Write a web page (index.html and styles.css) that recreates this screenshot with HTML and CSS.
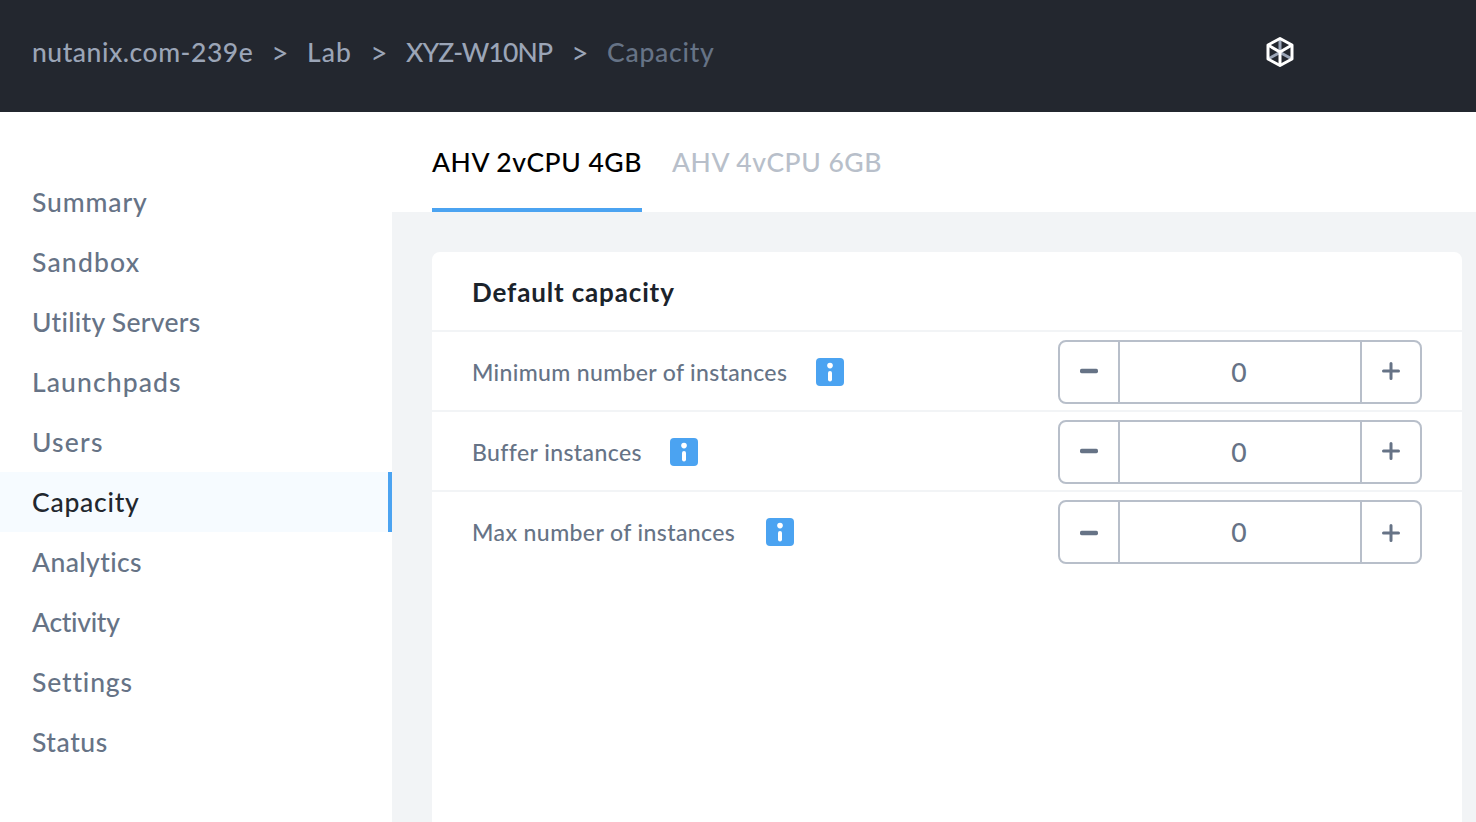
FILE: index.html
```html
<!DOCTYPE html>
<html lang="en">
<head>
<meta charset="utf-8">
<title>Capacity</title>
<link rel="stylesheet" href="styles.css">
</head>
<body>
<svg class="sprite" aria-hidden="true">
  <symbol id="info" viewBox="0 0 28 28">
    <rect width="28" height="28" rx="4" fill="#4ba3f1"/>
    <circle cx="14" cy="7.6" r="2.8" fill="#fff"/>
    <rect x="12" y="13" width="4" height="10.6" rx="2" fill="#fff"/>
  </symbol>
  <symbol id="minus" viewBox="0 0 18 18">
    <rect y="6.8" width="18" height="4.4" rx="1.6" fill="#667386"/>
  </symbol>
  <symbol id="plus" viewBox="0 0 18 18">
    <path d="M9 1.5v15M1.5 9h15" stroke="#667386" stroke-width="3" stroke-linecap="round"/>
  </symbol>
</svg>
<header class="topbar">
  <nav class="crumbs">
    <a class="crumb crumb-org">nutanix.com-239e</a>
    <span class="sep">&gt;</span>
    <a class="crumb crumb-lab">Lab</a>
    <span class="sep">&gt;</span>
    <a class="crumb crumb-account">XYZ-W10NP</a>
    <span class="sep">&gt;</span>
    <span class="crumb crumb-current">Capacity</span>
  </nav>
  <svg class="logo" viewBox="0 0 30 32" fill="none">
    <path d="M15 3v13M3 23l12-6.500 12 6.500" stroke="#9ba5b7" stroke-width="3"/>
    <path d="M15 2.500L27 9v14l-12 6.500L3 23V9z" stroke="#fff" stroke-width="3" stroke-linejoin="round"/>
    <path d="M3 9l12 7 12-7M15 16v13" stroke="#fff" stroke-width="3"/>
  </svg>
</header>
<div class="layout">
  <aside class="sidebar">
    <a class="item summary">Summary</a>
    <a class="item sandbox">Sandbox</a>
    <a class="item utility">Utility Servers</a>
    <a class="item launchpads">Launchpads</a>
    <a class="item users">Users</a>
    <a class="item capacity active">Capacity</a>
    <a class="item analytics">Analytics</a>
    <a class="item activity">Activity</a>
    <a class="item settings">Settings</a>
    <a class="item status">Status</a>
  </aside>
  <main class="main">
    <div class="tabs">
      <a class="tab selected">AHV 2vCPU 4GB</a>
      <a class="tab">AHV 4vCPU 6GB</a>
    </div>
    <section class="card">
      <h2 class="card-title">Default capacity</h2>
      <div class="row">
        <span class="label label-min">Minimum number of instances</span>
        <svg class="info"><use href="#info"/></svg>
        <div class="stepper">
          <button class="step"><svg class="glyph"><use href="#minus"/></svg></button>
          <span class="value">0</span>
          <button class="step"><svg class="glyph"><use href="#plus"/></svg></button>
        </div>
      </div>
      <div class="row">
        <span class="label label-buffer">Buffer instances</span>
        <svg class="info"><use href="#info"/></svg>
        <div class="stepper">
          <button class="step"><svg class="glyph"><use href="#minus"/></svg></button>
          <span class="value">0</span>
          <button class="step"><svg class="glyph"><use href="#plus"/></svg></button>
        </div>
      </div>
      <div class="row last">
        <span class="label label-max">Max number of instances</span>
        <svg class="info"><use href="#info"/></svg>
        <div class="stepper">
          <button class="step"><svg class="glyph"><use href="#minus"/></svg></button>
          <span class="value">0</span>
          <button class="step"><svg class="glyph"><use href="#plus"/></svg></button>
        </div>
      </div>
    </section>
  </main>
</div>
</body>
</html>
```
FILE: styles.css
```css
* { box-sizing: border-box; }
body {
  margin: 0;
  height: 822px;
  overflow: hidden;
  display: flex;
  flex-direction: column;
  background: #fff;
  color: #667386;
  font: 500 26.5px/60px Lato, "Open Sans", sans-serif;
  font-variant-ligatures: none;
  white-space: nowrap;
}
.sprite { display: none; }
.topbar {
  flex: none;
  height: 112px;
  padding: 0 181px 8px 32px;
  display: flex;
  align-items: center;
  justify-content: space-between;
  background: #23272f;
  color: #9ba5b7;
}
.crumbs { display: flex; }
.sep { width: 54px; text-align: center; font-size: 30px; font-weight: 400; }
.crumb-org { width: 221px; letter-spacing: 0.53px; }
.crumb-lab { width: 45px; letter-spacing: 1px; }
.crumb-account { width: 147px; letter-spacing: -0.85px; }
.crumb-current { width: 106px; letter-spacing: 0.75px; color: #667386; }
.logo { width: 30px; height: 32px; }
.layout { flex: 1; display: flex; min-height: 0; }
.sidebar { width: 392px; padding-top: 60px; display: flex; flex-direction: column; }
.item { height: 60px; padding-left: 32px; line-height: 60px; }
.summary { letter-spacing: 0.9px; }
.sandbox { letter-spacing: 1.2px; }
.utility { letter-spacing: 0.3px; }
.launchpads { letter-spacing: 1.1px; }
.users { letter-spacing: 1.2px; }
.capacity { letter-spacing: 0.75px; }
.analytics { letter-spacing: 0.4px; }
.activity { letter-spacing: -0.3px; }
.settings { letter-spacing: 0.85px; }
.status { letter-spacing: 0.55px; }
.active { background: #f6fbff; color: #22272e; border-right: 4px solid #4ba3f1; }
.main { flex: 1; display: flex; flex-direction: column; background: #f2f4f6; }
.tabs { height: 100px; padding-left: 40px; display: flex; gap: 30px; background: #fff; color: #b8bfca; }
.tab { width: 210px; line-height: 100px; height: 100px; letter-spacing: 0.53px; }
.selected { color: #000; border-bottom: 4px solid #4ba3f1; }
.card { flex: 1; margin: 40px 14px 0 40px; background: #fff; border-radius: 8px 8px 0 0; }
.card-title { margin: 0; height: 80px; padding-left: 40px; border-bottom: 2px solid #f2f4f6; color: #1b232b; font-size: 26px; font-weight: 700; line-height: 80px; letter-spacing: 0.85px; }
.row { height: 80px; padding: 0 40px; display: flex; align-items: center; border-bottom: 2px solid #f2f4f6; }
.last { border-bottom-color: transparent; }
.label { font-size: 23px; padding-top: 1px; }
.label-min { width: 344px; letter-spacing: 0.34px; }
.label-buffer { width: 198px; letter-spacing: 0.4px; }
.label-max { width: 294px; letter-spacing: 0.4px; }
.info { width: 28px; height: 28px; margin-top: 2px; }
.stepper { width: 364px; height: 64px; margin: 2px 0 0 auto; display: flex; border: 2px solid #b8bfca; border-radius: 8px; }
.step { width: 58px; padding: 0; border: 0; background: none; display: flex; align-items: center; justify-content: center; }
.glyph { width: 18px; height: 18px; margin-bottom: 2px; }
.last .glyph { margin: 2px 0 0; }
.value { flex: 1; border: solid #b8bfca; border-width: 0 2px; padding-right: 2px; text-align: center; line-height: 61px; }
```
